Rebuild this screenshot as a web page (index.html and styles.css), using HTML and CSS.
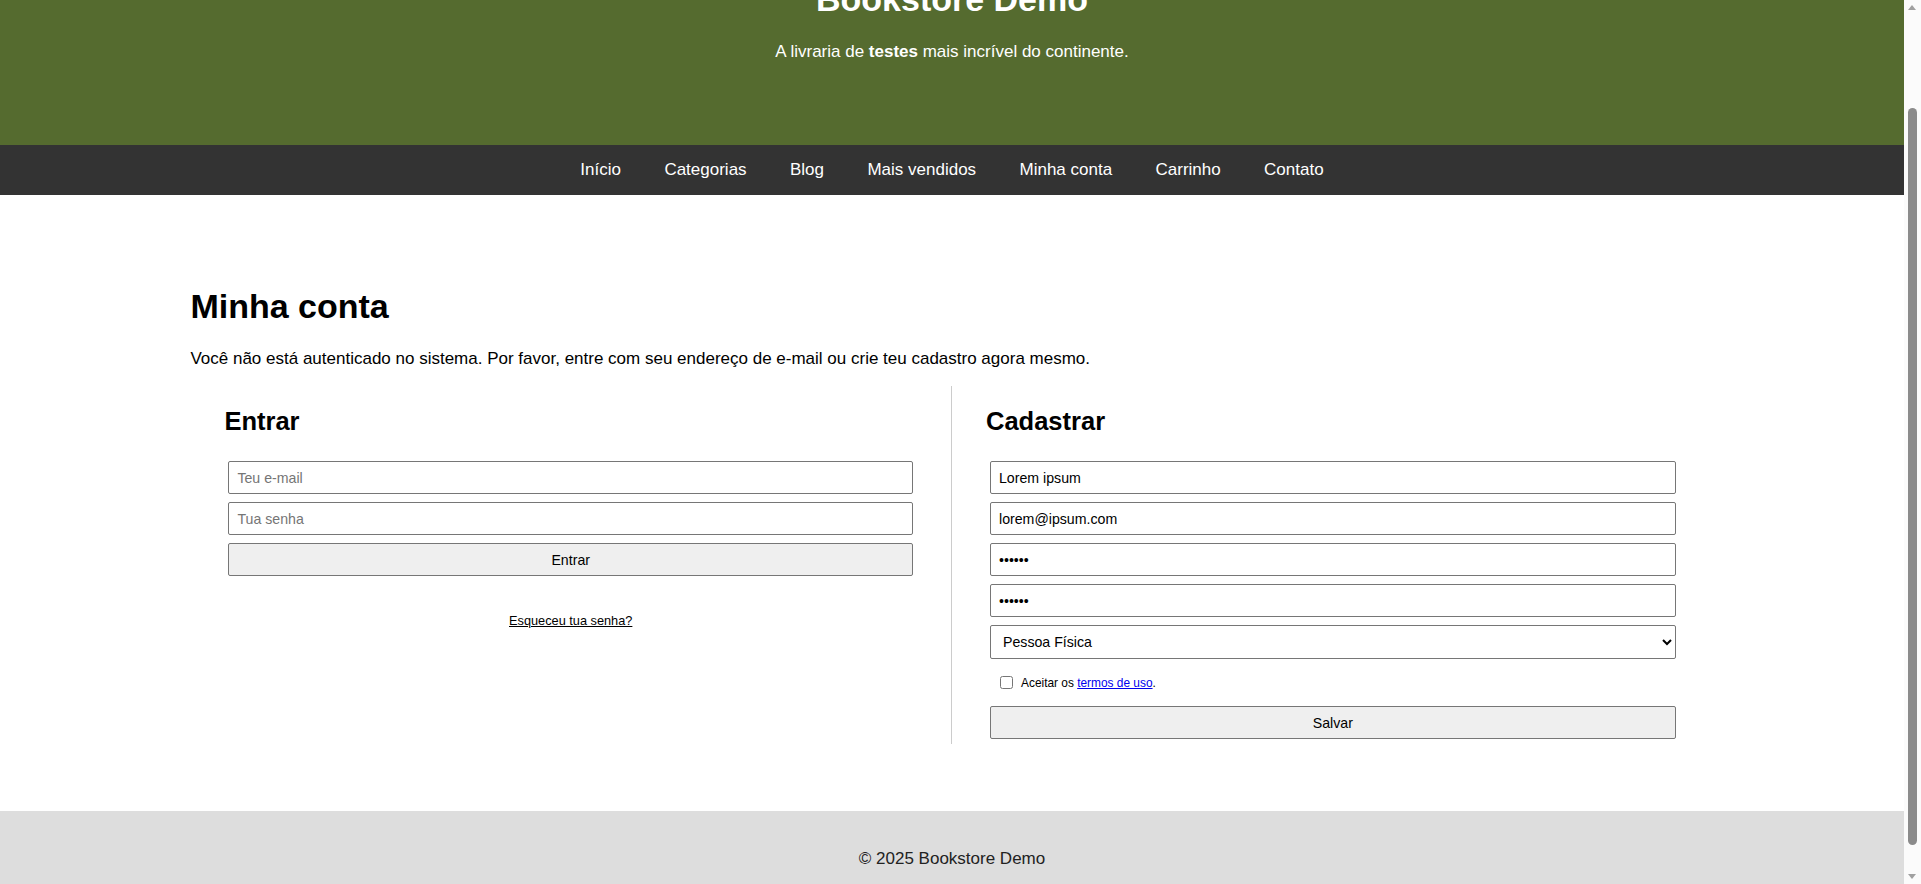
FILE: index.html
```html
<!DOCTYPE html>
<html lang="pt-BR">
<head>
<meta charset="utf-8">
<title>Minha conta – Bookstore Demo</title>
<link rel="stylesheet" href="styles.css">
</head>
<body>
<header class="site-header">
  <h1 class="site-title">Bookstore Demo</h1>
  <p class="tagline">A livraria de <strong>testes</strong> mais incrível do continente.</p>
</header>
<nav class="site-nav">
  <a href="#">Início</a>
  <a href="#">Categorias</a>
  <a href="#">Blog</a>
  <a href="#">Mais vendidos</a>
  <a href="#">Minha conta</a>
  <a href="#">Carrinho</a>
  <a href="#">Contato</a>
</nav>
<main class="page">
  <h1 class="page-title">Minha conta</h1>
  <p class="intro">Você não está autenticado no sistema. Por favor, entre com seu endereço de e-mail ou crie teu cadastro agora mesmo.</p>
  <div class="account-grid">
    <section class="account-col login">
      <h2 class="col-title">Entrar</h2>
      <form class="account-form">
        <input class="field" type="email" placeholder="Teu e-mail">
        <input class="field" type="password" placeholder="Tua senha">
        <button class="btn" type="button">Entrar</button>
        <p class="forgot"><a href="#">Esqueceu tua senha?</a></p>
      </form>
    </section>
    <section class="account-col register">
      <h2 class="col-title">Cadastrar</h2>
      <form class="account-form">
        <input class="field" type="text" value="Lorem ipsum">
        <input class="field" type="email" value="lorem@ipsum.com">
        <input class="field" type="password" value="123456">
        <input class="field" type="password" value="123456">
        <select class="field select">
          <option>Pessoa Física</option>
          <option>Pessoa Jurídica</option>
        </select>
        <label class="terms"><input class="check" type="checkbox"><span>Aceitar os <a href="#">termos de uso</a>.</span></label>
        <button class="btn" type="button">Salvar</button>
      </form>
    </section>
  </div>
</main>
<footer class="site-footer">
  <p>© 2025 Bookstore Demo</p>
</footer>
<div class="scrollbar" aria-hidden="true">
  <span class="sb-arrow sb-up"></span>
  <span class="sb-thumb"></span>
  <span class="sb-arrow sb-down"></span>
</div>
<script src="script.js"></script>
</body>
</html>
```

FILE: styles.css
```css
html, body {
  padding: 0;
}

html {
  margin: 0;
}

body {
  margin: 0 17px 0 0;
  font-family: "Liberation Sans", Arial, sans-serif;
  font-size: 17px;
  color: #000;
  background: #fff;
}

.site-header {
  background: #556b2f;
  color: #fff;
  text-align: center;
  padding: 65px 0 66px;
}

.site-title {
  font-size: 34px;
  margin: 22.78px 0;
}

.tagline {
  margin: 17px 0;
}

.site-nav {
  background: #333;
  height: 50px;
  display: flex;
  justify-content: center;
  align-items: center;
  gap: 43.4px;
}

.site-nav a {
  color: #fff;
  text-decoration: none;
}

.page {
  width: 80%;
  margin: 0 auto;
  padding: 70px 0 67px;
}

.page-title {
  font-size: 34px;
  margin: 22.78px 0;
}

.intro {
  margin: 17px 0;
}

.account-grid {
  display: grid;
  grid-template-columns: 1fr 1fr;
}

.account-col {
  padding: 0 34px 1px;
  min-width: 0;
}

.account-col.login {
  border-right: 1px solid #ccc;
}

.col-title {
  font-size: 25.5px;
  margin: 21.17px 0;
}

.account-form {
  padding: 4px;
  display: flex;
  flex-direction: column;
  gap: 8px;
}

.field {
  box-sizing: border-box;
  height: 33px;
  padding: 0 8px;
  font-family: "Liberation Sans", Arial, sans-serif;
  font-size: 14.17px;
  color: #000;
  border: 1px solid #767676;
  border-radius: 2px;
  background: #fff;
  margin: 0;
}

.field::placeholder {
  color: #757575;
}

.select {
  height: 34px;
  padding: 0 8px;
}

.btn {
  box-sizing: border-box;
  height: 33px;
  margin: 0;
  font-family: "Liberation Sans", Arial, sans-serif;
  font-size: 14.17px;
  color: #000;
  background: #efefef;
  border: 1px solid #767676;
  border-radius: 2px;
}

.forgot {
  margin: 29px 0 0;
  text-align: center;
  font-size: 12.75px;
}

.forgot a {
  color: #000;
}

.terms {
  display: flex;
  align-items: center;
  height: 31px;
  padding-left: 6px;
  font-size: 11.9px;
}

.check {
  width: 13px;
  height: 13px;
  margin: 0 8px 0 4px;
}

.terms a {
  color: #0000ee;
}

.site-footer {
  background: #ddd;
  text-align: center;
  padding: 38px 0 43px;
}

.site-footer p {
  margin: 0;
  color: #222;
}

/* classic window scrollbar drawn over the right edge */
.scrollbar {
  position: fixed;
  top: 0;
  right: 0;
  width: 17px;
  height: 100vh;
  background: #fbfbfb;
  z-index: 10;
}

.sb-thumb {
  position: absolute;
  top: 108px;
  left: 4px;
  width: 9px;
  height: 737px;
  border-radius: 5px;
  background: #8b8b8b;
}

.sb-arrow {
  position: absolute;
  left: 4px;
  width: 0;
  height: 0;
  border-left: 4.5px solid transparent;
  border-right: 4.5px solid transparent;
}

.sb-up {
  top: 5px;
  border-bottom: 5px solid #a0a0a0;
}

.sb-down {
  bottom: 5px;
  border-top: 5px solid #a0a0a0;
}
```

FILE: script.js
```js
(function () {
  function go() { window.scrollTo(0, 108); }
  go();
  window.addEventListener('load', go);
})();
```
